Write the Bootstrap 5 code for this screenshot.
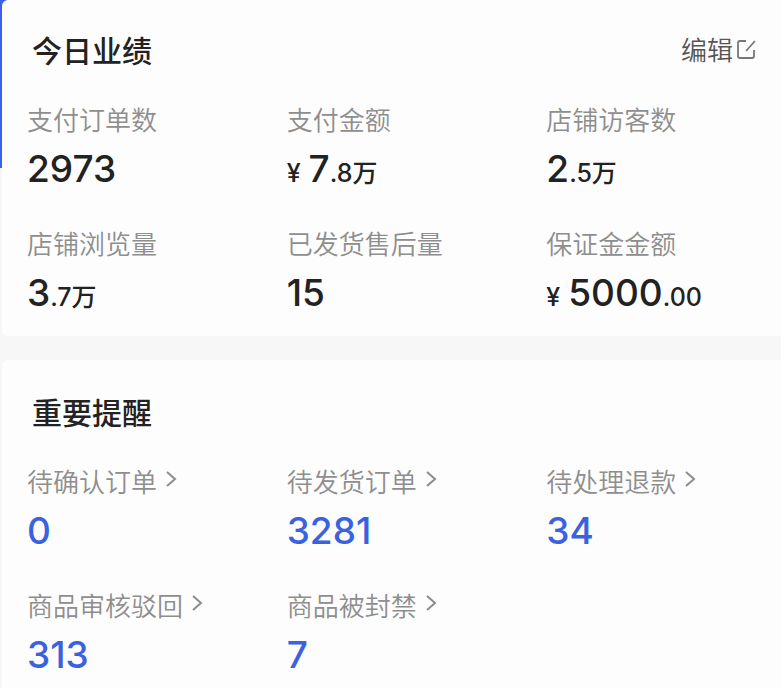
<!DOCTYPE html>
<html lang="zh-CN">
<head>
<meta charset="utf-8">
<meta name="viewport" content="width=device-width, initial-scale=1">
<title>今日业绩</title>
<link href="https://cdn.jsdelivr.net/npm/bootstrap@5.3.0/dist/css/bootstrap.min.css" rel="stylesheet">
<style>
  body {
    font-family: Inter, "Noto Sans CJK SC", sans-serif;
    color: #222;
    background: linear-gradient(#3f5fe8, #3f5fe8) 0 0 / 100% 168px no-repeat #f7f7f7;
  }
  .panel { background: #fdfdfd; margin-left: 2px; }
  .panel-title { font-size: 30px; line-height: 40px; font-weight: 500; font-family: "Noto Sans CJK SC", sans-serif; }
  .panel-head { padding: 29px 25px 0 30px; }
  .reminders .panel-head { padding-top: 31px; }
  .metrics { padding: 32px 0 19px; row-gap: 32px; }
  .metric { padding-left: 25px; }
  .metric-label { font-size: 26px; line-height: 36px; color: #8e8e8e; font-weight: 350; font-family: "Noto Sans CJK SC", sans-serif; }
  .metric-value { font-size: 37px; line-height: 48px; margin-top: 8px; font-weight: 450; }
  .unit { font-size: 25px; line-height: 1; }
  .blue { color: #3a62e0; }
  .edit { font-size: 26px; line-height: 36px; color: #555; font-weight: 350; font-family: "Noto Sans CJK SC", sans-serif; }
</style>
</head>
<body>
<main class="d-flex flex-column gap-4">
  <section class="panel rounded-start">
    <div class="panel-head d-flex justify-content-between align-items-center">
      <h2 class="panel-title m-0">今日业绩</h2>
      <button type="button" class="edit border-0 bg-transparent p-0 d-flex align-items-center">编辑<svg class="ms-1" width="19" height="20" viewBox="0 0 19 20" fill="none" stroke="#777" stroke-width="1.8" aria-hidden="true"><path d="M9 2H3Q1 2 1 4V17Q1 19 3 19H15Q17 19 17 17V11M9 12L18 2"/></svg></button>
    </div>
    <div class="metrics row g-0">
      <div class="metric col-4"><div class="metric-label">支付订单数</div><div class="metric-value">2973</div></div>
      <div class="metric col-4"><div class="metric-label">支付金额</div><div class="metric-value"><span class="unit me-2">¥</span>7<span class="unit">.8万</span></div></div>
      <div class="metric col-4"><div class="metric-label">店铺访客数</div><div class="metric-value">2<span class="unit">.5万</span></div></div>
      <div class="metric col-4"><div class="metric-label">店铺浏览量</div><div class="metric-value">3<span class="unit">.7万</span></div></div>
      <div class="metric col-4"><div class="metric-label">已发货售后量</div><div class="metric-value">15</div></div>
      <div class="metric col-4"><div class="metric-label">保证金金额</div><div class="metric-value"><span class="unit me-2">¥</span>5000<span class="unit">.00</span></div></div>
    </div>
  </section>
  <section class="panel reminders rounded-start">
    <div class="panel-head"><h2 class="panel-title m-0">重要提醒</h2></div>
    <div class="metrics row g-0">
      <a href="#confirm" class="metric col-4 text-decoration-none"><div class="metric-label d-flex align-items-center">待确认订单<svg class="ms-2" width="13" height="20" viewBox="0 0 13 20" fill="none" stroke="#8c8c8c" stroke-width="2" aria-hidden="true"><path d="M2 1L10 8L2 15"/></svg></div><div class="metric-value blue">0</div></a>
      <a href="#ship" class="metric col-4 text-decoration-none"><div class="metric-label d-flex align-items-center">待发货订单<svg class="ms-2" width="13" height="20" viewBox="0 0 13 20" fill="none" stroke="#8c8c8c" stroke-width="2" aria-hidden="true"><path d="M2 1L10 8L2 15"/></svg></div><div class="metric-value blue">3281</div></a>
      <a href="#refund" class="metric col-4 text-decoration-none"><div class="metric-label d-flex align-items-center">待处理退款<svg class="ms-2" width="13" height="20" viewBox="0 0 13 20" fill="none" stroke="#8c8c8c" stroke-width="2" aria-hidden="true"><path d="M2 1L10 8L2 15"/></svg></div><div class="metric-value blue">34</div></a>
      <a href="#rejected" class="metric col-4 text-decoration-none"><div class="metric-label d-flex align-items-center">商品审核驳回<svg class="ms-2" width="13" height="20" viewBox="0 0 13 20" fill="none" stroke="#8c8c8c" stroke-width="2" aria-hidden="true"><path d="M2 1L10 8L2 15"/></svg></div><div class="metric-value blue">313</div></a>
      <a href="#banned" class="metric col-4 text-decoration-none"><div class="metric-label d-flex align-items-center">商品被封禁<svg class="ms-2" width="13" height="20" viewBox="0 0 13 20" fill="none" stroke="#8c8c8c" stroke-width="2" aria-hidden="true"><path d="M2 1L10 8L2 15"/></svg></div><div class="metric-value blue">7</div></a>
    </div>
  </section>
</main>
<script src="https://cdn.jsdelivr.net/npm/bootstrap@5.3.0/dist/js/bootstrap.bundle.min.js"></script>
</body>
</html>
